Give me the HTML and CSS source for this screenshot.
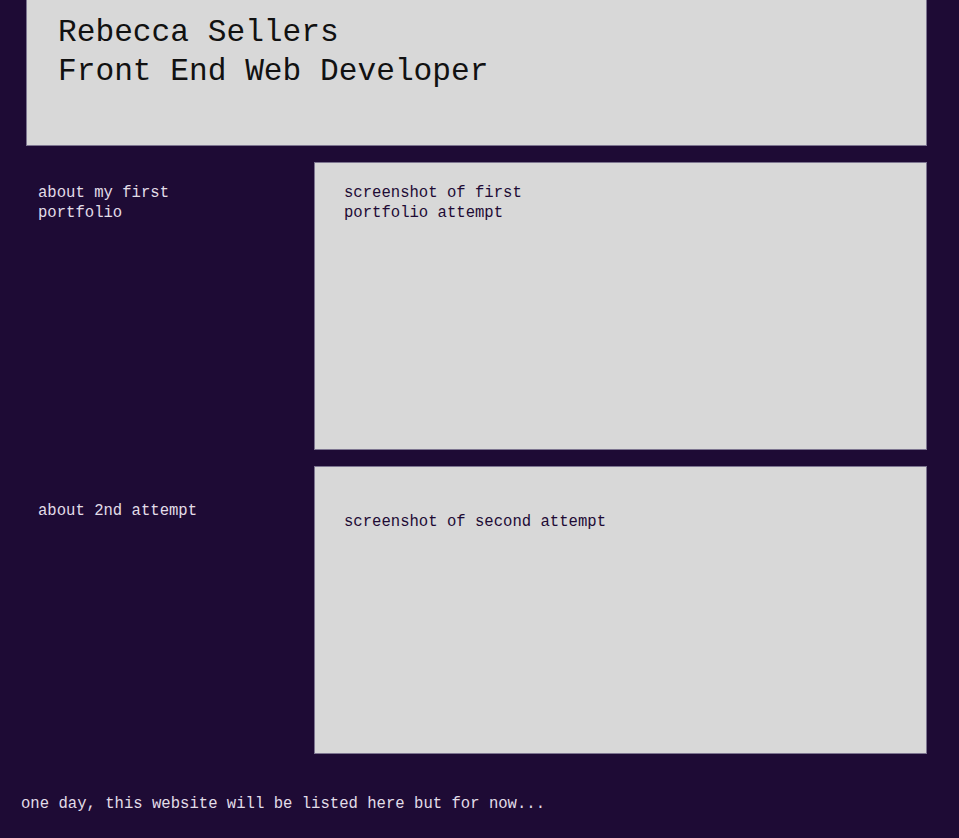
FILE: index.html
```html
<!DOCTYPE html>
<html lang="en">
<head>
<meta charset="utf-8">
<title>Rebecca Sellers</title>
<link rel="stylesheet" href="styles.css">
</head>
<body>
<header class="header">
  <h1 class="title">Rebecca Sellers<br>Front End Web Developer</h1>
</header>
<main class="projects">
  <section class="project">
    <p class="about about-first">about my first portfolio</p>
    <div class="shot">
      <p class="shot-text shot-first">screenshot of first portfolio attempt</p>
    </div>
  </section>
  <section class="project">
    <p class="about about-second">about 2nd attempt</p>
    <div class="shot">
      <p class="shot-text shot-second">screenshot of second attempt</p>
    </div>
  </section>
</main>
<footer class="footer">
  <p class="footer-text">one day, this website will be listed here but for now...</p>
</footer>
</body>
</html>
```

FILE: styles.css
```css
html, body {
  margin: 0;
  padding: 0;
}

body {
  background: #1e0b35;
  font-family: "Liberation Mono", "DejaVu Sans Mono", monospace;
  font-size: 15.6px;
  line-height: 20px;
  color: #e2dde8;
}

p {
  margin: 0;
}

.header {
  margin: 0 32px 0 26px;
  height: 146px;
  box-sizing: border-box;
  padding: 13px 0 0 31px;
  background: #d8d8d8;
  border: 1px solid #7d7590;
  border-top: none;
}

.title {
  margin: 0;
  font-weight: normal;
  font-size: 31.2px;
  line-height: 39px;
  color: #111111;
}

.projects {
  margin: 16px 32px 0 26px;
  display: flex;
  flex-direction: column;
  gap: 16px;
}

.project {
  display: grid;
  grid-template-columns: 288px 1fr;
  height: 288px;
}

.about {
  padding-left: 12px;
  width: 200px;
}

.about-first {
  padding-top: 21px;
}

.about-second {
  padding-top: 35px;
}

.shot {
  background: #d8d8d8;
  border: 1px solid #7d7590;
  padding-left: 29px;
}

.shot-text {
  width: 266px;
  color: #1e0b35;
}

.shot-first {
  padding-top: 20px;
}

.shot-second {
  padding-top: 45px;
}

.footer {
  padding: 40px 0 20px 21px;
}
```
